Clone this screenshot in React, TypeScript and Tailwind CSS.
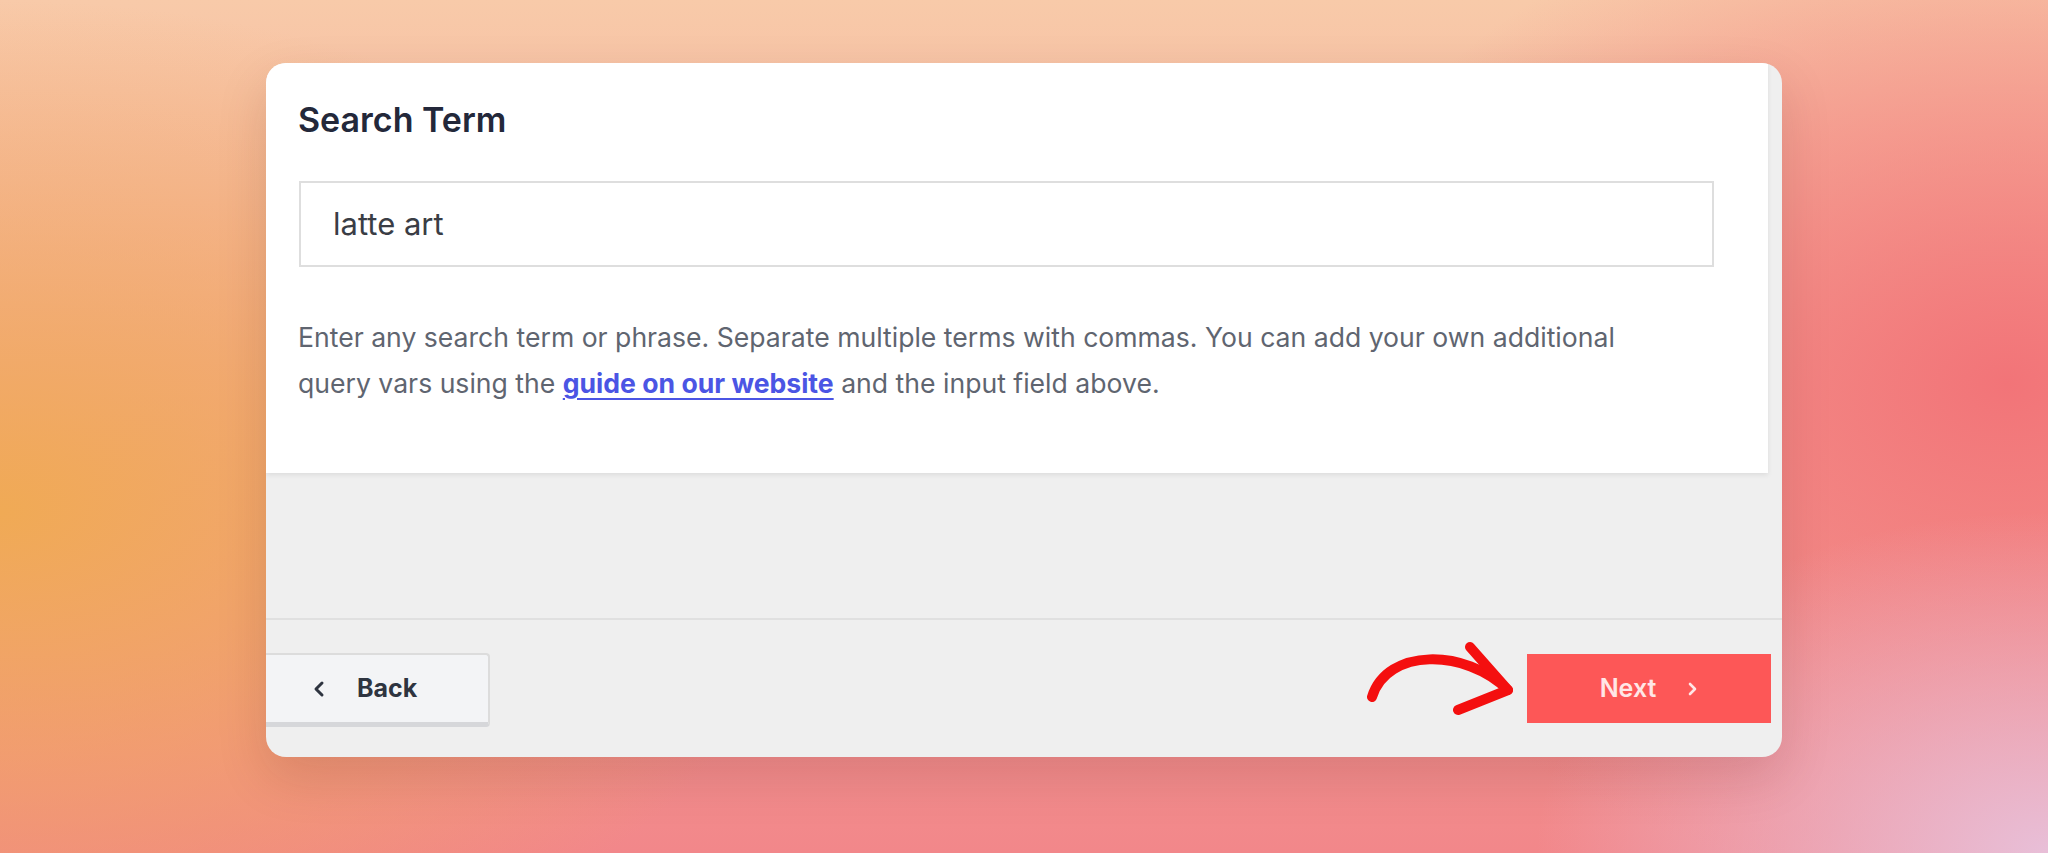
import React from 'react'

function ArrowMark() {
  return (
    <svg width="150" height="80" viewBox="0 0 150 80" fill="none" className="mt-[20px] mr-[12px] shrink-0">
      <path d="M7 57 C 22 8, 100 8, 143 50" stroke="#f40f0f" strokeWidth="10" strokeLinecap="round" />
      <path d="M105 7 L143 50 L93 70" stroke="#f40f0f" strokeWidth="10" strokeLinecap="round" strokeLinejoin="round" />
    </svg>
  )
}

export default function App() {
  return (
    <div
      className="flex h-[853px] w-full justify-center overflow-hidden pt-[63px] font-['Inter','Liberation_Sans',sans-serif] bg-[radial-gradient(ellipse_40%_60%_at_0%_60%,#f0aa55_0%,rgba(240,170,85,0)_100%),radial-gradient(ellipse_25%_40%_at_100%_100%,#e8bfd8_0%,rgba(232,191,216,0)_100%),radial-gradient(ellipse_35%_60%_at_98%_45%,#f27478_0%,rgba(242,116,120,0)_100%),linear-gradient(180deg,#f8caa9_0%,#f4a898_45%,#f2878a_100%)]"
    >
      <div className="flex h-[694px] w-[1516px] flex-col overflow-hidden rounded-[20px] bg-[#efefef] shadow-[0_20px_50px_rgba(80,20,20,0.15)]">
        {/* form body */}
        <div className="mr-[14px] h-[410px] shrink-0 bg-white pl-[32px] pt-[37px] shadow-[0_2px_5px_rgba(0,0,0,0.08)]">
          <h2 className="text-[34px] font-semibold leading-[40px] text-[#23283a]">Search Term</h2>
          <div className="mt-[41px] ml-px flex h-[86px] w-[1415px] items-center border-2 border-[#dedede] pl-[32px]">
            <span className="text-[31px] text-[#3a3d45]">latte art</span>
          </div>
          <p className="mt-[47px] w-[1380px] text-[26.6px] leading-[46px] text-[#5f6570]">
            Enter any search term or phrase. Separate multiple terms with commas. You can add your own additional
            query vars using the{' '}
            <a className="font-bold text-[#4b55e4] underline decoration-2 underline-offset-[5px]">guide on our website</a>{' '}
            and the input field above.
          </p>
        </div>

        <div className="h-[145px] shrink-0" />
        <div className="h-[2px] shrink-0 bg-[#e0e0e0]" />

        {/* footer */}
        <div className="flex flex-1 items-start">
          <button className="mt-[33px] flex h-[74px] w-[224px] items-center gap-[32px] rounded-r-[4px] border-2 border-l-0 border-[#dcdcdc] border-b-[5px] border-b-[#d6d7da] bg-[#f3f4f6] pl-[47px]">
            <svg width="12" height="18" viewBox="0 0 12 18" fill="none">
              <polyline points="9,3 3,9 9,15" stroke="#2e3440" strokeWidth="3" strokeLinecap="round" strokeLinejoin="round" />
            </svg>
            <span className="text-[25px] font-bold text-[#2e3440]">Back</span>
          </button>
          <div className="flex-1" />
          <ArrowMark />
          <button className="mt-[34px] mr-[11px] flex h-[69px] w-[244px] items-center justify-center gap-[32px] bg-[#fd5757]">
            <span className="text-[25px] font-semibold text-[#ffe6e6]">Next</span>
            <svg width="10" height="14" viewBox="0 0 10 14" fill="none">
              <polyline points="2,2 7,7 2,12" stroke="#ffe6e6" strokeWidth="2.6" strokeLinecap="round" strokeLinejoin="round" />
            </svg>
          </button>
        </div>
      </div>
    </div>
  )
}
